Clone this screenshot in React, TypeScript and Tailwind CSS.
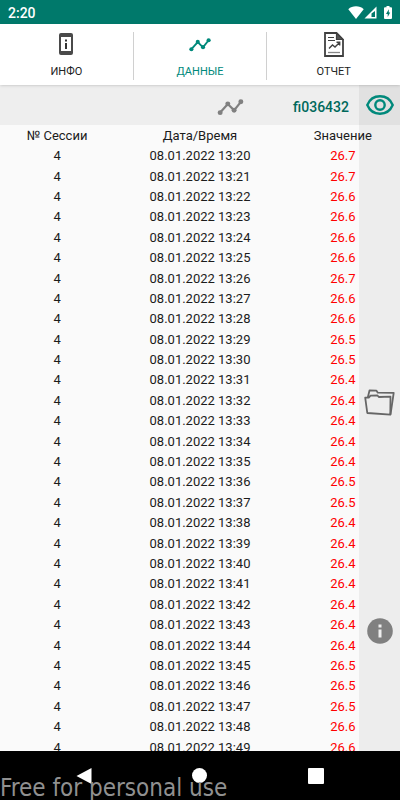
import type { ReactNode } from 'react';

interface Reading {
    session: number;
    time: string;
    value: string;
}

const VALUES = [
    26.7, 26.7, 26.6, 26.6, 26.6, 26.6, 26.7, 26.6, 26.6, 26.5,
    26.5, 26.4, 26.4, 26.4, 26.4, 26.4, 26.5, 26.5, 26.4, 26.4,
    26.4, 26.4, 26.4, 26.4, 26.4, 26.5, 26.5, 26.5, 26.6, 26.6,
];

// One reading per minute, starting at 13:20
const READINGS: Reading[] = VALUES.map((value, i) => ({
    session: 4,
    time: `08.01.2022 13:${20 + i}`,
    value: value.toFixed(1),
}));

function TimelineIcon({ className }: { className: string }) {
    return (
        <svg viewBox="0 0 24 16" className={className} fill="currentColor" aria-hidden="true">
            <path d="M2.6 13.2 9.6 5.4 15.2 11 21.4 3.2" fill="none" stroke="currentColor" strokeWidth="2" />
            <circle cx="2.8" cy="13" r="2.2" />
            <circle cx="9.6" cy="5.2" r="2.2" />
            <circle cx="15.2" cy="10.8" r="2.2" />
            <circle cx="21.2" cy="3.4" r="2.2" />
        </svg>
    );
}

function PhoneInfoIcon() {
    return (
        <svg viewBox="0 0 14 22" className="h-[22px] w-3.5" aria-hidden="true">
            <path fillRule="evenodd" fill="#4a4a4a" d="M2 0h10a2 2 0 0 1 2 2v18a2 2 0 0 1-2 2H2a2 2 0 0 1-2-2V2a2 2 0 0 1 2-2Zm0 4v14h10V4Z" />
            <path fill="#333" d="M6 6.500h2v2H6zM6 10h2v6H6z" />
        </svg>
    );
}

function ReportIcon() {
    return (
        <svg viewBox="0 0 20 25" className="h-[25px] w-5" fill="none" stroke="#404040" aria-hidden="true">
            <path d="M1 1h11.500L19 7.500V24H1Z" strokeWidth="1.800" />
            <path d="M12.500 1v6.500H19Z" fill="#555" strokeWidth="1.200" />
            <path d="M4 5.500h6M4 8.500h7" strokeWidth="1.200" />
            <path d="M5 16.500 8.500 13l2.500 2 4.500-4.500M12.500 10.300h3.200v3.200" strokeWidth="1.400" />
            <path d="M4 20.500h12" stroke="#888" strokeWidth="1.300" />
        </svg>
    );
}

function StatusBar() {
    return (
        <header className="flex h-6 shrink-0 items-center justify-between bg-[#00796b] px-2 text-white">
            <span className="mt-0.5 text-sm font-medium">2:20</span>
            <div className="flex items-center">
                <svg viewBox="0 0 16 13" className="h-[13px] w-4" fill="#fff" aria-hidden="true">
                    <path d="M8 13 .3 3.200C2.400 1.200 5 .3 8 .3s5.600.9 7.700 2.900Z" />
                </svg>
                <svg viewBox="0 0 13 13" className="h-[13px] w-[13px]" aria-hidden="true">
                    <path d="M12.500.5v12H.5Z" fill="#fff" />
                    <path d="M11 5v6H7.500V7.500Z" fill="#00796b" />
                </svg>
                <svg viewBox="0 0 8 13" className="ml-[7px] h-[13px] w-2" aria-hidden="true">
                    <path d="M2.500 0h3v1.200H7a1 1 0 0 1 1 1V12a1 1 0 0 1-1 1H1a1 1 0 0 1-1-1V2.200a1 1 0 0 1 1-1h1.500Z" fill="#fff" />
                    <path d="M4.800 3.300 2 8h1.700v3L6.200 6.500H4.800Z" fill="#00796b" />
                </svg>
            </div>
        </header>
    );
}

function Tab({ icon, label, active = false }: { icon: ReactNode; label: string; active?: boolean }) {
    return (
        <button
            type="button"
            aria-pressed={active}
            className={`flex flex-1 flex-col items-center ${active ? 'text-[#00897b]' : 'text-[#212121]'}`}
        >
            <span className="flex h-6 items-center justify-center">{icon}</span>
            <span className="mt-2 text-[11px] leading-4">{label}</span>
        </button>
    );
}

// Translucent strip of actions that lies over the right edge of the data
function SideActions() {
    return (
        <aside className="absolute inset-y-0 right-0 flex w-[41px] flex-col bg-black/5">
            <button type="button" aria-label="Просмотр" className="flex h-10 items-center justify-center text-[#00897b]">
                <svg viewBox="0 0 28 20" className="h-5 w-7" fill="none" stroke="currentColor" strokeWidth="2.400" aria-hidden="true">
                    <path d="M1.300 10C3.600 4.500 8.400 1.300 14 1.300S24.400 4.500 26.700 10C24.400 15.500 19.600 18.700 14 18.700S3.600 15.500 1.300 10Z" />
                    <circle cx="14" cy="10" r="4.700" />
                </svg>
            </button>
            <button type="button" aria-label="Папка" className="mt-[257px] flex h-10 items-center justify-center text-[#666]">
                <svg viewBox="0 0 31 27" className="h-[27px] w-[31px]" fill="none" stroke="currentColor" strokeWidth="1.800" strokeLinejoin="round" aria-hidden="true">
                    <path d="M1.200 8.700 5 8.500l1.500-1.800 7-.2 1.300 1.500 11.700-.3L26.300 25.700 3.300 24Z" />
                    <path d="M3.800 8.500 5.500 1.500l7 .2 1.300 2 15.900.1L26.500 25.500" />
                </svg>
            </button>
            <button type="button" aria-label="Информация" className="mt-[189px] flex h-10 items-center justify-center">
                <svg viewBox="0 0 26 26" className="h-[26px] w-[26px]" aria-hidden="true">
                    <circle cx="13" cy="13" r="12.800" fill="#808080" />
                    <path d="M11.500 6.500h3v3h-3zM11.500 11.500h3v8h-3z" fill="#eee" />
                </svg>
            </button>
        </aside>
    );
}

function ReadingsTable() {
    return (
        <table className="mt-px h-[632px] w-full shrink-0 table-fixed border-collapse text-center text-[13px] leading-5 text-[#1c1c1c]">
            <colgroup>
                <col className="w-2/7" />
                <col className="w-3/7" />
                <col className="w-2/7" />
            </colgroup>
            <thead>
                <tr>
                    <th scope="col" className="p-0 font-normal">№ Сессии</th>
                    <th scope="col" className="p-0 font-normal">Дата/Время</th>
                    <th scope="col" className="p-0 font-normal">Значение</th>
                </tr>
            </thead>
            <tbody>
                {READINGS.map((r) => (
                    <tr key={r.time}>
                        <td className="p-0">{r.session}</td>
                        <td className="p-0">{r.time}</td>
                        <td className="p-0 text-[#f00]">{r.value}</td>
                    </tr>
                ))}
            </tbody>
        </table>
    );
}

function NavigationBar() {
    return (
        <footer className="relative h-[49px] shrink-0 bg-black">
            <nav className="flex h-full items-center justify-around px-[26px]">
                <button type="button" aria-label="Назад" className="flex">
                    <svg viewBox="0 0 16 16" className="size-4" fill="#fff" aria-hidden="true">
                        <path d="M15.500 0v16L.500 8Z" />
                    </svg>
                </button>
                <button type="button" aria-label="Домой" className="size-[15px] rounded-full bg-white" />
                <button type="button" aria-label="Недавние" className="size-4 rounded-[1px] bg-white" />
            </nav>
            <span className="absolute bottom-0 left-0 font-['DejaVu_Sans_Condensed','DejaVu_Sans',sans-serif] text-2xl leading-6 whitespace-nowrap text-[#909090]">
                Free for personal use
            </span>
        </footer>
    );
}

export default function App() {
    return (
        <div className="flex h-screen flex-col overflow-hidden bg-[#fafafa] font-['Roboto',sans-serif]">
            <StatusBar />

            <div className="relative z-10 flex shrink-0 bg-white pt-2 pb-[5px] shadow-sm">
                <Tab icon={<PhoneInfoIcon />} label="ИНФО" />
                <div className="w-px bg-[#d0d0d0]" />
                <Tab icon={<TimelineIcon className="h-[15px] w-6" />} label="ДАННЫЕ" active />
                <div className="w-px bg-[#d0d0d0]" />
                <Tab icon={<ReportIcon />} label="ОТЧЕТ" />
            </div>

            <main className="relative flex min-h-0 flex-1 flex-col overflow-hidden">
                <div className="flex h-10 shrink-0 items-center justify-end bg-[#eee] pr-[51px]">
                    <TimelineIcon className="mt-1 mr-12 h-[18px] w-[29px] text-[#808080]" />
                    <span className="mt-1 text-sm font-medium text-[#00695c]">fi036432</span>
                </div>
                <ReadingsTable />
                <SideActions />
            </main>

            <NavigationBar />
        </div>
    );
}
